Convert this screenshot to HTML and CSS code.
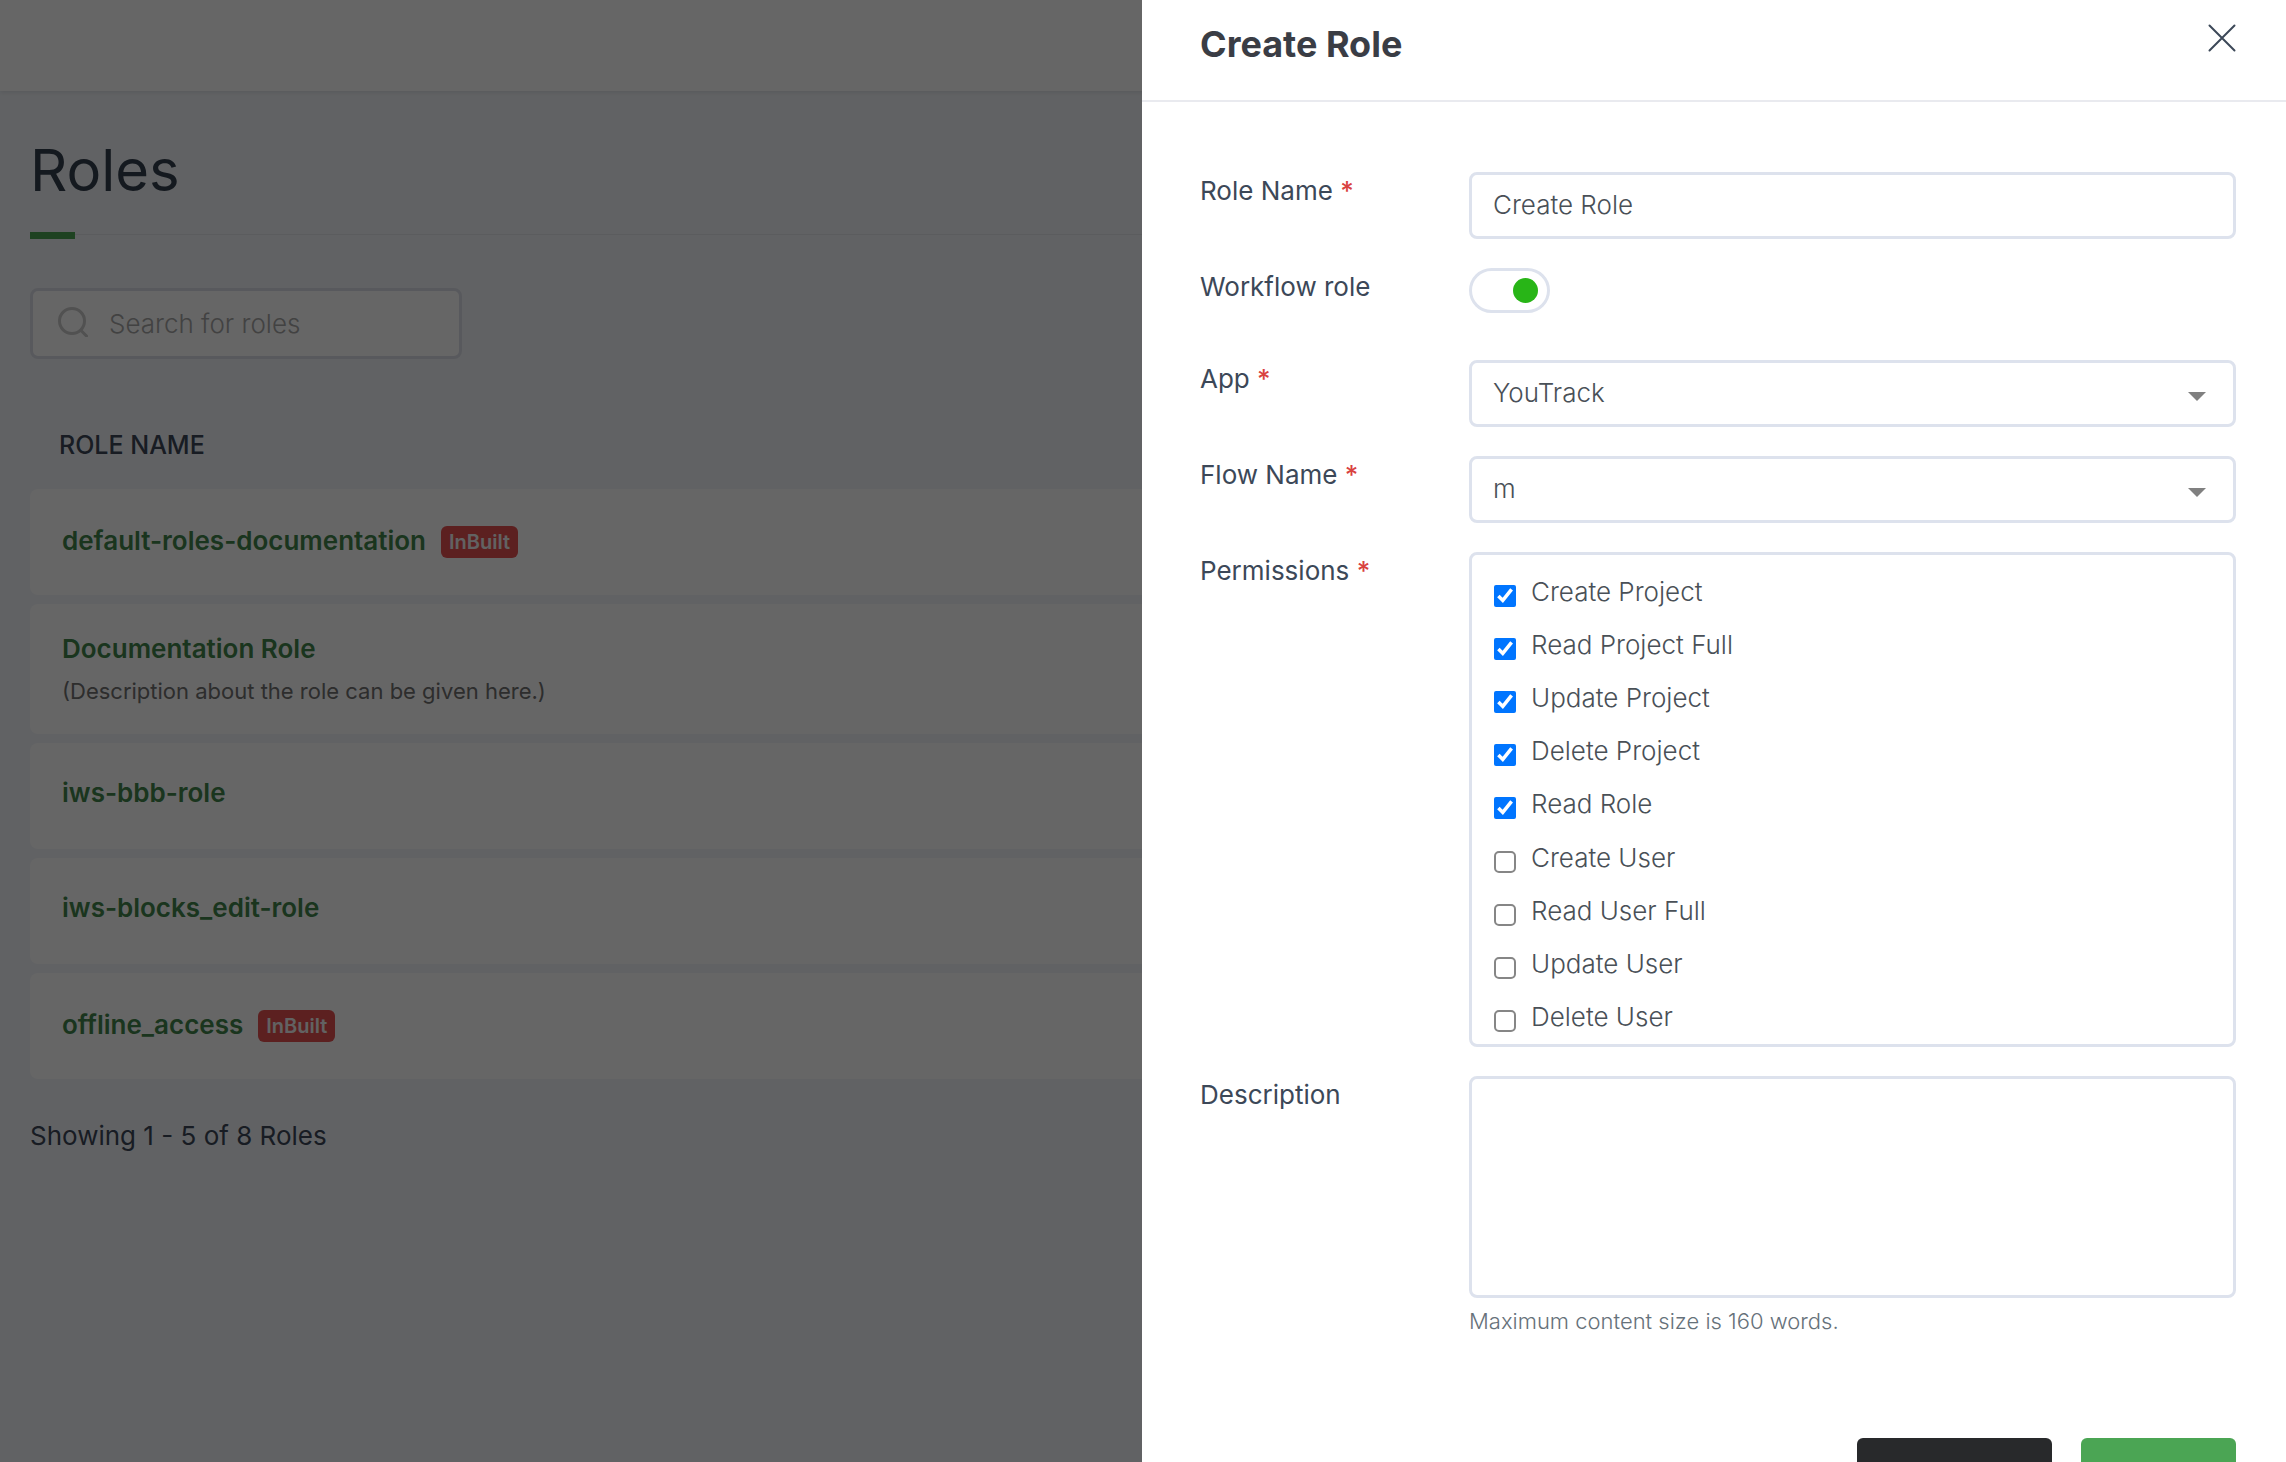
FILE: index.html
```html
<!DOCTYPE html>
<html lang="en">
<head>
<meta charset="utf-8">
<meta name="viewport" content="width=device-width, initial-scale=1">
<title>Roles</title>
<link rel="stylesheet" href="styles.css">
</head>
<body>
<header class="topbar"></header>
<main class="page">
  <div class="page-head"><h1 class="page-title">Roles</h1></div>
  <label class="search">
    <svg class="search-icon" viewBox="0 0 30 30" aria-hidden="true"><circle cx="14" cy="14" r="12.5"/><path d="M23 23.500 28.500 29"/></svg>
    <input class="search-input" type="search" placeholder="Search for roles" aria-label="Search for roles">
  </label>
  <table class="roles">
    <thead><tr><th scope="col">ROLE NAME</th></tr></thead>
    <tbody>
      <tr><td><div class="role"><a href="#">default-roles-documentation</a><span class="badge">InBuilt</span></div></td></tr>
      <tr><td class="described"><div class="role"><a href="#">Documentation Role</a></div><p class="role-note">(Description about the role can be given here.)</p></td></tr>
      <tr><td><div class="role"><a href="#">iws-bbb-role</a></div></td></tr>
      <tr><td><div class="role"><a href="#">iws-blocks_edit-role</a></div></td></tr>
      <tr><td><div class="role"><a href="#">offline_access</a><span class="badge">InBuilt</span></div></td></tr>
    </tbody>
  </table>
  <p class="count">Showing 1 - 5 of 8 Roles</p>
</main>
<div class="backdrop"></div>
<section class="drawer" role="dialog" aria-labelledby="drawer-title">
  <header class="drawer-head">
    <h2 class="drawer-title" id="drawer-title">Create Role</h2>
    <button class="close" type="button" aria-label="Close"><svg viewBox="0 0 28 28" aria-hidden="true"><path d="M1.500 1.500 26.500 26.500M26.500 1.500 1.500 26.500"/></svg></button>
  </header>
  <form class="form">
    <div class="row">
      <label class="label" for="role-name">Role Name <span class="required">*</span></label>
      <input class="field" id="role-name" type="text" value="Create Role">
    </div>
    <div class="row row-toggle">
      <label class="label" for="workflow">Workflow role</label>
      <input class="toggle" id="workflow" type="checkbox" role="switch" checked>
    </div>
    <div class="row">
      <label class="label" for="app">App <span class="required">*</span></label>
      <div class="select"><select class="field" id="app"><option>YouTrack</option></select><svg class="caret" viewBox="0 0 18 9" aria-hidden="true"><path d="M0 0h18L9 9z"/></svg></div>
    </div>
    <div class="row">
      <label class="label" for="flow">Flow Name <span class="required">*</span></label>
      <div class="select"><select class="field" id="flow"><option>m</option></select><svg class="caret" viewBox="0 0 18 9" aria-hidden="true"><path d="M0 0h18L9 9z"/></svg></div>
    </div>
    <div class="row" role="group" aria-labelledby="permissions">
      <span class="label" id="permissions">Permissions <span class="required">*</span></span>
      <div class="permissions">
        <label class="check"><input type="checkbox" checked><span>Create Project</span></label>
        <label class="check"><input type="checkbox" checked><span>Read Project Full</span></label>
        <label class="check"><input type="checkbox" checked><span>Update Project</span></label>
        <label class="check"><input type="checkbox" checked><span>Delete Project</span></label>
        <label class="check"><input type="checkbox" checked><span>Read Role</span></label>
        <label class="check"><input type="checkbox"><span>Create User</span></label>
        <label class="check"><input type="checkbox"><span>Read User Full</span></label>
        <label class="check"><input type="checkbox"><span>Update User</span></label>
        <label class="check"><input type="checkbox"><span>Delete User</span></label>
      </div>
    </div>
    <div class="row">
      <label class="label" for="description">Description</label>
      <div class="text-block">
        <textarea class="field area" id="description" aria-describedby="description-help"></textarea>
        <p class="help" id="description-help">Maximum content size is 160 words.</p>
      </div>
    </div>
    <div class="actions">
      <button class="button button-dark" type="button">Cancel</button>
      <button class="button button-green" type="submit">Create</button>
    </div>
  </form>
</section>
</body>
</html>
```

FILE: styles.css
```css
* {
  box-sizing: border-box;
}

body {
  margin: 0;
  min-height: 100vh;
  overflow: hidden;
  background: #f3f6fa;
  color: #3c4858;
  font-family: Inter, "Liberation Sans", sans-serif;
  font-size: 26px;
  line-height: 32px;
}

h1, h2, p {
  margin: 0;
}

input, select, textarea, button {
  font: inherit;
  color: inherit;
}

.topbar {
  height: 91px;
  background: #fff;
  box-shadow: 0 2px 4px #dfe2e8;
}

.page {
  padding: 44px 30px;
}

.page-head {
  padding-bottom: 29px;
  border-bottom: 1px solid #e4e7ec;
}

.page-head::after {
  content: "";
  display: block;
  width: 45px;
  height: 7px;
  margin-bottom: -34px;
  margin-top: 27px;
  background: #4ba554;
}

.page-title {
  font-size: 58px;
  line-height: 70px;
  font-weight: 400;
  color: #343f4e;
}

.search {
  display: flex;
  align-items: center;
  gap: 21px;
  width: 432px;
  height: 71px;
  margin-top: 53px;
  padding: 0 25px;
  border: 3px solid #dddfe8;
  border-radius: 8px;
  background: #fff;
}

.search-icon {
  flex: none;
  width: 30px;
  height: 30px;
  margin-bottom: 3px;
  fill: none;
  stroke: #cacaca;
  stroke-width: 3;
  stroke-linecap: round;
}

.search-input {
  flex: 1;
  min-width: 0;
  padding: 0;
  border: 0;
  outline: 0;
  background: none;
  font-weight: 300;
}

.search-input::placeholder {
  color: #a6a6a6;
  opacity: 1;
}

.roles {
  width: 100%;
  margin-top: 61px;
  border-spacing: 0 9px;
}

.roles th {
  padding: 0 29px 19px;
  text-align: left;
  font-size: 25px;
  font-weight: 500;
}

.roles td {
  height: 106px;
  padding: 34px 32px 0;
  border-radius: 8px;
  background: #fff;
  vertical-align: top;
}

.roles .described {
  height: 130px;
  padding-top: 29px;
}

.role {
  display: flex;
  align-items: center;
  gap: 15px;
}

.role a {
  color: #41854b;
  font-weight: 600;
  text-decoration: none;
}

.badge {
  margin-top: 3px;
  padding: 0 8px;
  border-radius: 6px;
  background: #e55050;
  color: #f5f5f5;
  font-size: 20px;
  font-weight: 600;
}

.role-note {
  margin-top: 10px;
  color: #707070;
  font-size: 22px;
}

.count {
  margin-top: 32px;
}

.backdrop {
  position: fixed;
  inset: 0;
  background: rgba(0, 0, 0, 0.6);
}

.drawer {
  position: fixed;
  inset: 0 0 0 auto;
  width: calc(50% + 1px);
  overflow: hidden;
  background: #fff;
}

.drawer-head {
  display: flex;
  align-items: flex-start;
  justify-content: space-between;
  padding: 22px 50px 34px 58px;
  border-bottom: 2px solid #e9eaef;
}

.drawer-title {
  color: #3a3d45;
  font-size: 36px;
  line-height: 44px;
  font-weight: 700;
}

.close {
  display: flex;
  margin-top: 2px;
  padding: 0;
  border: 0;
  background: none;
}

.close svg {
  width: 28px;
  height: 28px;
  fill: none;
  stroke: #3c4858;
  stroke-width: 2;
  stroke-linecap: round;
}

.form {
  display: flex;
  flex-direction: column;
  gap: 29px;
  padding: 70px 50px 50px 58px;
}

.row {
  display: grid;
  grid-template-columns: 269px 1fr;
  align-items: start;
}

.row-toggle {
  min-height: 63px;
}

.label {
  padding-top: 3px;
}

.required {
  color: #d9423f;
  font-weight: 500;
}

.field,
.permissions {
  width: 100%;
  border: 3px solid #dde2ed;
  border-radius: 8px;
  background: #fff;
  color: #495057;
  font-weight: 300;
}

.field {
  display: block;
  height: 67px;
  padding: 0 21px 2px;
}

.toggle {
  appearance: none;
  display: flex;
  align-items: center;
  justify-content: flex-end;
  width: 81px;
  height: 45px;
  margin: 0;
  padding: 0 9px;
  border: 3px solid #dde2ed;
  border-radius: 24px;
}

.toggle::before {
  content: "";
  width: 25px;
  height: 25px;
  border-radius: 50%;
  background: #28b517;
}

.select {
  display: grid;
  align-items: center;
}

.select .field {
  grid-area: 1 / 1;
  appearance: none;
}

.caret {
  grid-area: 1 / 1;
  justify-self: end;
  width: 18px;
  height: 9px;
  margin: 6px 30px 0 0;
  fill: #808080;
  pointer-events: none;
}

.permissions {
  display: grid;
  grid-auto-rows: 1fr;
  height: 495px;
  padding: 10px 22px 0;
}

.check {
  display: flex;
  align-items: center;
  gap: 15px;
}

.check input {
  width: 22px;
  height: 22px;
  margin: 8px 0 0;
  accent-color: #0075ff;
}

.check input:not(:checked) {
  appearance: none;
  border: 2px solid #868686;
  border-radius: 5px;
}

.area {
  height: 222px;
  padding: 16px 22px;
  resize: none;
}

.help {
  margin-top: 7px;
  color: #66717a;
  font-size: 22px;
  font-weight: 300;
}

.actions {
  display: flex;
  justify-content: flex-end;
  gap: 29px;
  margin-top: 72px;
}

.button {
  height: 96px;
  padding: 0 36px;
  border: 0;
  border-radius: 6px;
  color: #fff;
}

.button-dark {
  min-width: 195px;
  background: #28292b;
}

.button-green {
  min-width: 155px;
  background: #4ba554;
}
```
